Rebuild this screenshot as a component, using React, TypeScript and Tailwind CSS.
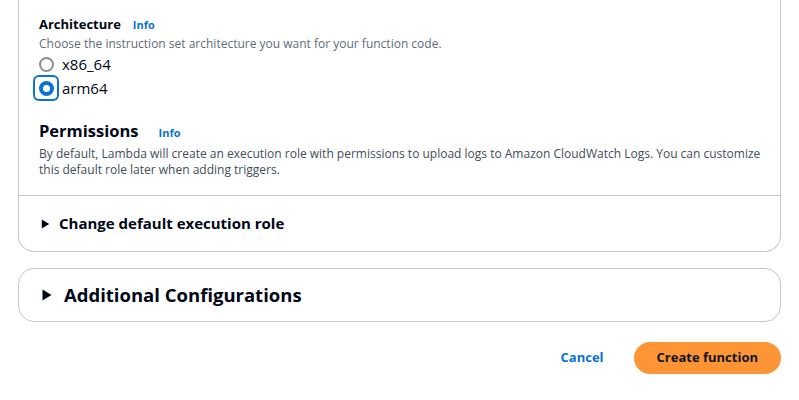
import * as React from "react";

function Caret({ className = "" }: { className?: string }) {
  return (
    <svg viewBox="0 0 10 12" className={className} aria-hidden>
      <path d="M0.5 0.5 L9.5 6 L0.5 11.5 Z" fill="currentColor" />
    </svg>
  );
}

function Radio({ label, checked }: { label: string; checked?: boolean }) {
  return (
    <label className="flex h-6 items-center">
      <span
        className={[
          "flex h-[22px] w-[22px] items-center justify-center rounded-[4px]",
          checked ? "ring-2 ring-[#0972d3]" : "",
        ].join(" ")}
      >
        {checked ? (
          <span className="flex h-[15px] w-[15px] items-center justify-center rounded-full bg-[#0972d3]">
            <span className="h-[7px] w-[7px] rounded-full bg-white" />
          </span>
        ) : (
          <span className="h-[15px] w-[15px] rounded-full border-2 border-[#8c8c94]" />
        )}
      </span>
      <span className="ml-[5px] text-[15px] text-[#000716]">{label}</span>
    </label>
  );
}

export default function App() {
  return (
    <main
      className="h-[400px] w-[799px] overflow-hidden bg-white text-[#000716]"
      style={{ fontFamily: '"Open Sans", "Noto Sans", sans-serif' }}
    >
      <div className="px-[18px]">
        <div className="-mt-4 rounded-b-2xl border border-t-0 border-[#c6c6cd]">
          <div className="pl-5 pr-4 pt-[30px] pb-[17px]">
            <div className="flex items-baseline gap-3">
              <h3 className="text-[13px] font-bold leading-[20px]">Architecture</h3>
              <a className="text-[11px] font-bold text-[#0972d3]">Info</a>
            </div>
            <p className="mt-[2px] text-[12px] leading-[16px] text-[#5f6b7a]">
              Choose the instruction set architecture you want for your function code.
            </p>
            <div className="-ml-1 flex flex-col">
              <Radio label="x86_64" />
              <Radio label="arm64" checked />
            </div>

            <div className="mt-[19px] flex items-baseline gap-[20px]">
              <h2 className="text-[16.5px] font-bold leading-[24px]">Permissions</h2>
              <a className="text-[11px] font-bold text-[#0972d3]">Info</a>
            </div>
            <p className="mt-[3px] text-[12px] leading-[16px] text-[#414d5c]">
              By default, Lambda will create an execution role with permissions to upload logs to Amazon
              CloudWatch Logs. You can customize this default role later when adding triggers.
            </p>
          </div>
          <div className="border-t border-[#c6c6cd]" />
          <button className="flex h-[55px] w-full items-center gap-[9px] pl-[22px] text-left">
            <Caret className="h-[10px] w-[9px]" />
            <span className="text-[15px] font-bold">Change default execution role</span>
          </button>
        </div>

        <div className="mt-[16px] rounded-2xl border border-[#c6c6cd]">
          <button className="flex h-[52px] w-full items-center gap-[12px] pl-[23px] text-left">
            <Caret className="h-[12px] w-[10px]" />
            <span className="text-[18.5px] font-bold">Additional Configurations</span>
          </button>
        </div>

        <div className="mt-[20px] flex items-center justify-end gap-[30px]">
          <button className="text-[13px] font-bold text-[#0972d3]">Cancel</button>
          <button className="h-[32px] rounded-full bg-[#fd9536] px-[23px] text-[13px] font-bold text-[#0f141a]">
            Create function
          </button>
        </div>
      </div>
    </main>
  );
}
